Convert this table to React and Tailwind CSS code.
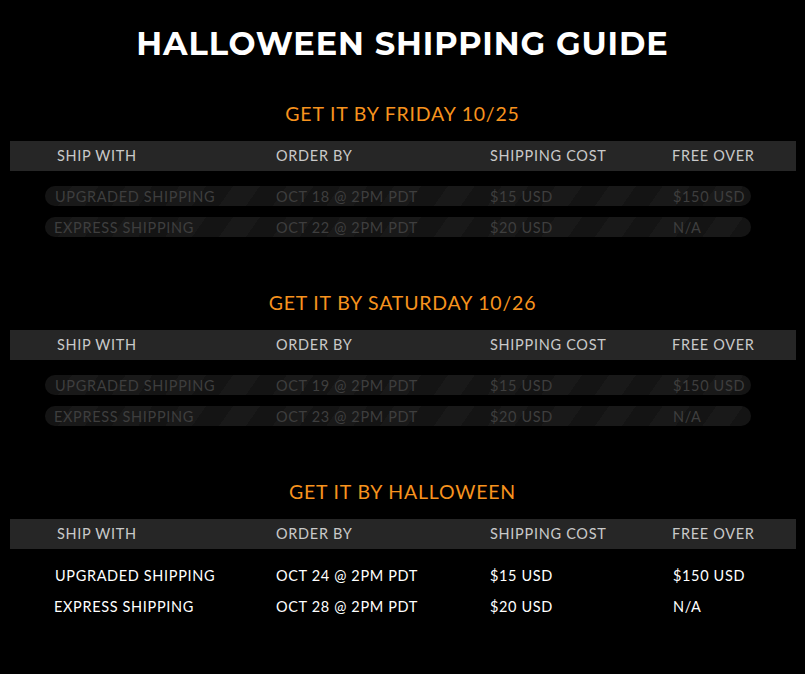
import React from "react";

const sections = [
  {
    title: "GET IT BY FRIDAY 10/25",
    faded: true,
    rows: [
      ["UPGRADED SHIPPING", "OCT 18 @ 2PM PDT", "$15 USD", "$150 USD"],
      ["EXPRESS SHIPPING", "OCT 22 @ 2PM PDT", "$20 USD", "N/A"],
    ],
  },
  {
    title: "GET IT BY SATURDAY 10/26",
    faded: true,
    rows: [
      ["UPGRADED SHIPPING", "OCT 19 @ 2PM PDT", "$15 USD", "$150 USD"],
      ["EXPRESS SHIPPING", "OCT 23 @ 2PM PDT", "$20 USD", "N/A"],
    ],
  },
  {
    title: "GET IT BY HALLOWEEN",
    faded: false,
    rows: [
      ["UPGRADED SHIPPING", "OCT 24 @ 2PM PDT", "$15 USD", "$150 USD"],
      ["EXPRESS SHIPPING", "OCT 28 @ 2PM PDT", "$20 USD", "N/A"],
    ],
  },
];

function Section({ s }) {
  return (
    <div className="flex flex-col">
      <div className="h-[28px] leading-[28px] text-center text-[19.5px] text-[#f7931e] tracking-[0.8px]">
        {s.title}
      </div>
      <div className="mt-[13px] ml-[10px] w-[786px] h-[30px] bg-[#262626] flex items-center pl-[47px] text-[14.5px] text-[#c9c9c9] tracking-[0.7px]">
        <div className="w-[219px]">SHIP WITH</div>
        <div className="w-[214px]">ORDER BY</div>
        <div className="w-[182px]">SHIPPING COST</div>
        <div>FREE OVER</div>
      </div>
      <div className="mt-[15px] ml-[45px] w-[706px] flex flex-col gap-[11px]">
        {s.rows.map((r, i) => (
          <div
            key={i}
            className={
              s.faded
                ? "h-[20px] rounded-full flex items-center pt-[2px] pl-[10px] text-[14.5px] tracking-[0.65px] text-[#3e3e3e] bg-[repeating-linear-gradient(125deg,#141414_0px,#141414_22px,#191919_22px,#191919_44px)]"
                : "h-[20px] flex items-center pt-[3px] pl-[10px] text-[14.5px] tracking-[0.65px] text-white"
            }
          >
            <div className={i === 1 ? "w-[222px] -ml-[1px]" : "w-[221px]"}>{r[0]}</div>
            <div className="w-[214px]">{r[1]}</div>
            <div className="w-[183px]">{r[2]}</div>
            <div>{r[3]}</div>
          </div>
        ))}
      </div>
    </div>
  );
}

export default function App() {
  return (
    <div className="w-[805px] h-[674px] bg-black overflow-hidden font-['Lato','Liberation_Sans',sans-serif]">
      <div className="pt-[24px] h-[64px] text-center text-[32px] leading-[40px] font-bold text-white tracking-[0.9px] font-['Montserrat','Lato','Liberation_Sans',sans-serif]">
        HALLOWEEN SHIPPING GUIDE
      </div>
      <div className="mt-[36px] flex flex-col gap-[52px]">
        {sections.map((s, i) => (
          <Section key={i} s={s} />
        ))}
      </div>
    </div>
  );
}
